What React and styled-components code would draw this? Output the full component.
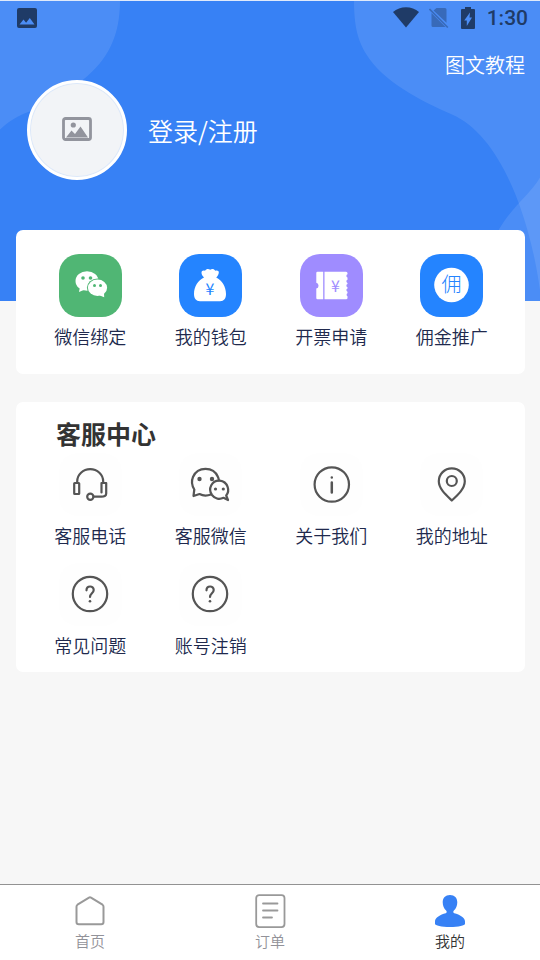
import styled, { createGlobalStyle } from "styled-components";

const GlobalStyle = createGlobalStyle`
  :root {
    --Blue: #3781f5;
    --Bright-Blue: #2484ff;
    --Green: #50b674;
    --Purple: #9f8cff;
    --Navy: #20294d;
    --Dark-Gray: #333333;
    --Icon-Gray: #555555;
    --Tab-Gray: #929299;
    --Page: #f7f7f7;
    --Status: #1f3b67;
  }
  *,
  *::before,
  *::after {
    box-sizing: border-box;
  }
  body {
    margin: 0;
    background: var(--Page);
    font-family: "Noto Sans CJK SC", sans-serif;
    font-weight: 350;
  }
  h2 {
    margin: 0;
  }
  a {
    color: inherit;
    text-decoration: none;
  }
  button {
    border: none;
    padding: 0;
    background: none;
    color: inherit;
    font: inherit;
    cursor: pointer;
  }
  svg {
    display: block;
  }
`;

const WechatIcon = () => (
  <svg viewBox="0 0 63 63" fill="#fff">
    <ellipse cx="28" cy="27" rx="11.5" ry="9.8" />
    <path d="M21 33l-1 5 6-2.5z" />
    <ellipse cx="38.5" cy="33.7" rx="10.6" ry="9.2" fill="var(--Green)" />
    <ellipse cx="38.5" cy="33.7" rx="9.6" ry="8.2" />
    <path d="M45 39l.2 4.200-5-2z" />
    <g fill="var(--Green)">
      <circle cx="24" cy="24" r="1.800" />
      <circle cx="31.500" cy="24" r="1.800" />
      <circle cx="35.500" cy="31.500" r="1.500" />
      <circle cx="41.500" cy="31.500" r="1.500" />
    </g>
  </svg>
);

const WalletIcon = () => (
  <svg viewBox="0 0 63 63" fill="#fff">
    <path d="M25 23.500c-1.500-1.500-2.500-3-2.500-5 0-1.700 1.500-2.500 3.500-1.800 1.300-2 3.600-2 5.200-.9 1.600-1.100 4-.9 5 .9 2.200-.7 3.800.2 3.600 2-.2 1.800-1.200 3.300-2.600 4.800C43 26.500 47 32.500 47 40c0 4.500-2 7.200-6 7.200H21c-4 0-6-2.700-6-7.200 0-7.500 4-13.500 10-16.500z" />
    <text
      x="31"
      y="41"
      textAnchor="middle"
      fontFamily="Noto Sans CJK SC, sans-serif"
      fontSize="16"
      fontWeight="400"
      fill="var(--Bright-Blue)"
    >
      ¥
    </text>
  </svg>
);

const TicketIcon = () => (
  <svg viewBox="0 0 63 63" fill="#fff">
    <path d="M17.500 17.800h5.700v27.400h-5.700q-1.200 0-1.200-1.200v-9.400a3 3 0 0 0 0-5.800V19q0-1.200 1.200-1.200z" />
    <path d="M24.500 17.800H46q1.500 0 1.500 1.500v1a1.700 1.700 0 0 0 0 3.200v2.200a1.700 1.700 0 0 0 0 3.200v1.200a1.700 1.700 0 0 0 0 3.200v1.200a1.700 1.700 0 0 0 0 3.200v1.600a1.700 1.700 0 0 0 0 3v1.600q0 1.300-1.500 1.300H24.500z" />
    <text
      x="35.500"
      y="38"
      textAnchor="middle"
      fontFamily="Noto Sans CJK SC, sans-serif"
      fontSize="16"
      fontWeight="400"
      fill="var(--Purple)"
    >
      ¥
    </text>
  </svg>
);

const CommissionIcon = () => (
  <svg viewBox="0 0 63 63">
    <circle cx="31.500" cy="31" r="17.300" fill="#fff" />
    <text
      x="31.500"
      y="38"
      textAnchor="middle"
      fontFamily="Noto Sans CJK SC, sans-serif"
      fontSize="20"
      fontWeight="300"
      fill="var(--Bright-Blue)"
    >
      佣
    </text>
  </svg>
);

const LineIcon = ({ children }) => (
  <svg
    viewBox="0 0 63 63"
    fill="none"
    stroke="var(--Icon-Gray)"
    strokeWidth="2.200"
    strokeLinecap="round"
    strokeLinejoin="round"
  >
    {children}
  </svg>
);

const HeadsetIcon = () => (
  <LineIcon>
    <path d="M18.200 30v-1.500a13 12.300 0 0 1 26 0V30" />
    <rect x="15.200" y="30" width="5" height="11" rx=".5" />
    <path d="M42.500 39.500V30h4.700v10.500c0 2.500-2 3.200-5 3.200h-7.500" />
    <circle cx="31.300" cy="43.700" r="3.100" />
  </LineIcon>
);

const ServiceWechatIcon = () => (
  <LineIcon>
    <path d="M32 41.500c-3.800 1.400-8 1.400-11.500-.5L14.500 43l.8-6.500C12.800 32.500 12.300 28 14 24c4.700-10.800 20.400-10.800 25 0 .5 1.100.8 2.200.9 3.500" />
    <path d="M47.200 42.500c4-4.700 1.700-13.800-6.400-14.800-7.800-.6-12.300 8-7.800 14.300 3 4 7.700 4.600 11.500 2.800L49 47z" />
    <g fill="var(--Icon-Gray)" stroke="none">
      <circle cx="20.500" cy="26" r="2.200" />
      <circle cx="33" cy="26" r="2.200" />
      <circle cx="36.500" cy="36" r="1.600" />
      <circle cx="44.300" cy="36" r="1.600" />
    </g>
  </LineIcon>
);

const AboutIcon = () => (
  <LineIcon>
    <circle cx="31.800" cy="31.500" r="17.200" />
    <path d="M31.800 29.500v10M31.800 24.400v.2" strokeWidth="2.500" />
  </LineIcon>
);

const AddressIcon = () => (
  <LineIcon>
    <path d="M31.800 47.500C25.500 41.500 18.800 35.500 18.800 28.300a13 13 0 0 1 26 0c0 7.200-6.500 13.200-13 19.200z" />
    <circle cx="31.800" cy="28" r="5" />
  </LineIcon>
);

const QuestionIcon = () => (
  <LineIcon>
    <circle cx="31" cy="31" r="17.200" />
    <path d="M27.500 27.300c0-5 7.200-5 7.200-.4 0 3.200-3.700 3.400-3.700 7" />
    <path d="M31 38.200v.1" strokeWidth="2.600" />
  </LineIcon>
);

const HomeIcon = () => (
  <svg
    viewBox="0 0 34 34"
    fill="none"
    stroke="#999"
    strokeWidth="2"
    strokeLinejoin="round"
  >
    <path d="M4.500 10.700q-1 .7-1 2V28q0 2.300 2.300 2.300h22.400q2.300 0 2.300-2.300V12.700q0-1.300-1-2L18 3.600q-1-.6-2 0z" />
  </svg>
);

const OrderIcon = () => (
  <svg
    viewBox="0 0 34 34"
    fill="none"
    stroke="#999"
    strokeWidth="1.800"
    strokeLinecap="round"
  >
    <rect x="3.200" y="1.100" width="28.300" height="32" rx="3" />
    <path d="M10 9.500h14.500M10 16.500h14.500M10 23.500h9" />
  </svg>
);

const MineIcon = () => (
  <svg viewBox="0 0 34 34" fill="var(--Blue)">
    <path d="M17 1c4.600 0 7.300 2.900 7.300 7.200 0 3.300-1.300 6.500-3.400 8.300-.9.900-.8 2.400.4 2.800 5.400 1.500 10.700 4.200 10.700 8.200v2.300C32 31.500 25.500 33 17 33S2 31.500 2 29.800v-2.300c0-4 5.300-6.700 10.700-8.200 1.200-.4 1.300-1.900.4-2.800-2.100-1.800-3.400-5-3.400-8.300C9.700 3.900 12.400 1 17 1z" />
  </svg>
);

const mainItems = [
  { label: "微信绑定", color: "var(--Green)", Icon: WechatIcon },
  { label: "我的钱包", color: "var(--Bright-Blue)", Icon: WalletIcon },
  { label: "开票申请", color: "var(--Purple)", Icon: TicketIcon },
  { label: "佣金推广", color: "var(--Bright-Blue)", Icon: CommissionIcon },
];

const serviceItems = [
  { label: "客服电话", Icon: HeadsetIcon },
  { label: "客服微信", Icon: ServiceWechatIcon },
  { label: "关于我们", Icon: AboutIcon },
  { label: "我的地址", Icon: AddressIcon },
  { label: "常见问题", Icon: QuestionIcon },
  { label: "账号注销", Icon: QuestionIcon },
];

const tabs = [
  { label: "首页", Icon: HomeIcon },
  { label: "订单", Icon: OrderIcon },
  { label: "我的", Icon: MineIcon, active: true },
];

const StatusBar = () => (
  <StatusRow>
    <svg width="20" height="20" viewBox="0 0 20 20">
      <path
        fillRule="evenodd"
        fill="currentColor"
        d="M2 0h16q2 0 2 2v16q0 2-2 2H2q-2 0-2-2V2q0-2 2-2zM2.500 16.500h15L12.800 10l-3.700 4.700-2.600-3.100z"
      />
    </svg>
    <StatusIcons>
      <svg width="26" height="22" viewBox="0 0 26 22" fill="currentColor">
        <path d="M0 5C7-1.500 19-1.500 26 5L13 20.500z" />
      </svg>
      <svg width="20" height="22" viewBox="0 0 20 22">
        <g opacity=".42">
          <path fill="currentColor" d="M7.500 1h8.500q1.500 0 1.500 1.500v13.200L4.500 3.500zM2.500 6L16.500 20H4q-1.500 0-1.500-1.500z" />
          <path d="M.5 2l18.300 18.500" stroke="currentColor" strokeWidth="1.600" />
        </g>
      </svg>
      <svg width="14" height="22" viewBox="0 0 14 22">
        <path
          fillRule="evenodd"
          fill="currentColor"
          d="M4 0h6v2h3q1 0 1 1v18q0 1-1 1H1q-1 0-1-1V3q0-1 1-1h3zM9 5.500L3.200 13.500h2.600v5.500L11 10.500H8.500z"
        />
      </svg>
      <Time>1:30</Time>
    </StatusIcons>
  </StatusRow>
);

const MenuItem = ({ label, color, Icon }) => (
  <Item type="button">
    <Tile $color={color}>
      <Icon />
    </Tile>
    <span>{label}</span>
  </Item>
);

const App = () => {
  return (
    <Page>
      <GlobalStyle />
      <Hero>
        <HeroShapes viewBox="0 0 540 301" preserveAspectRatio="none" fill="#fff">
          <path
            opacity=".1"
            d="M0 0H120C120 35 108 59 83 79C63 96 48 105 29 111C18 115 8 121 0 129z"
          />
          <path
            opacity=".1"
            d="M354 0C354 26 358 40 366 53C382 80 420 100 452 114C496 133 528 205 540 290V0z"
          />
          <path opacity=".1" d="M540 177C530 194 514 204 499 229L470 301H540z" />
        </HeroShapes>
        <StatusBar />
        <TutorialLink href="#tutorial">图文教程</TutorialLink>
        <Profile href="#login">
          <Avatar>
            <svg width="30" height="24" viewBox="0 0 30 24">
              <rect
                x="1.500"
                y="1.500"
                width="27"
                height="21"
                rx="2"
                fill="none"
                stroke="currentColor"
                strokeWidth="2.800"
              />
              <circle cx="11.300" cy="8" r="2.600" fill="currentColor" />
              <path d="M4 20.500l5.500-7 3.500 3.500 5.500-7.500L26 20.500z" fill="currentColor" />
            </svg>
          </Avatar>
          <span>登录/注册</span>
        </Profile>
      </Hero>

      <Content>
        <Card>
          <MenuGrid>
            {mainItems.map((item) => (
              <MenuItem key={item.label} {...item} />
            ))}
          </MenuGrid>
        </Card>
        <Card $compact>
          <CardTitle>客服中心</CardTitle>
          <MenuGrid>
            {serviceItems.map((item) => (
              <MenuItem key={item.label} {...item} />
            ))}
          </MenuGrid>
        </Card>
      </Content>

      <TabBar>
        {tabs.map(({ label, Icon, active }) => (
          <Tab key={label} href="#tab" $active={active}>
            <Icon />
            <span>{label}</span>
          </Tab>
        ))}
      </TabBar>
    </Page>
  );
};

export default App;

const Page = styled.div`
  display: flex;
  flex-direction: column;
  min-height: 100vh;
`;

const Hero = styled.header`
  position: relative;
  display: flex;
  flex-direction: column;
  padding-bottom: 121px;
  border-top: 1px solid #dfe9fa;
  background: var(--Blue);
  color: #fff;
`;

const HeroShapes = styled.svg`
  position: absolute;
  inset: 0;
  width: 100%;
  height: 100%;
`;

const StatusRow = styled.div`
  position: relative;
  display: flex;
  align-items: center;
  justify-content: space-between;
  height: 34px;
  padding: 0 12px 0 17px;
  color: var(--Status);
`;

const StatusIcons = styled.div`
  display: flex;
  align-items: center;
  gap: 12px;
  svg:first-child {
    margin-right: -2px;
  }
`;

const Time = styled.span`
  font-family: Roboto, sans-serif;
  font-size: 21px;
  font-weight: 500;
  line-height: 24px;
`;

const TutorialLink = styled.a`
  position: relative;
  align-self: flex-end;
  margin: 16px 15px 1px;
  font-size: 20px;
  line-height: 28px;
`;

const Profile = styled.a`
  position: relative;
  display: flex;
  align-items: center;
  align-self: flex-start;
  gap: 21px;
  margin-left: 27px;
  font-size: 25px;
  line-height: 36px;
`;

const Avatar = styled.div`
  display: flex;
  align-items: center;
  justify-content: center;
  width: 100px;
  height: 100px;
  padding-bottom: 3px;
  border: 3px solid #fff;
  border-radius: 50%;
  background: #f2f4f7;
  box-shadow: inset 0 0 0 1px #dce8fa;
  color: #92949d;
`;

const Content = styled.main`
  position: relative;
  display: flex;
  flex: 1;
  flex-direction: column;
  gap: 28px;
  margin-top: -71px;
  padding: 0 15px 28px 16px;
`;

const Card = styled.section`
  padding: ${(props) => (props.$compact ? "14px 13px 15px 14px" : "24px 13px 26px 14px")};
  border-radius: 7px;
  background: #fff;
`;

const CardTitle = styled.h2`
  padding: 0 0 2px 26px;
  color: var(--Dark-Gray);
  font-size: 25px;
  font-weight: 700;
  line-height: 35px;
`;

const MenuGrid = styled.div`
  display: grid;
  grid-template-columns: repeat(4, 1fr);
  row-gap: 16px;
`;

const Item = styled.button`
  display: flex;
  flex-direction: column;
  align-items: center;
  gap: 7px;
  color: var(--Navy);
  font-size: 18px;
  line-height: 24px;
`;

const Tile = styled.span`
  width: 63px;
  height: 63px;
  border-radius: 20px;
  background: ${(props) => props.$color || "#fefefe"};
`;

const TabBar = styled.nav`
  position: sticky;
  bottom: 0;
  display: grid;
  grid-template-columns: repeat(3, 1fr);
  padding: 9px 0 8px;
  border-top: 1px solid #929292;
  background: #fff;
`;

const Tab = styled.a`
  display: flex;
  flex-direction: column;
  align-items: center;
  gap: 2px;
  color: ${(props) => (props.$active ? "var(--Dark-Gray)" : "var(--Tab-Gray)")};
  font-size: 15px;
  line-height: 22px;
  svg {
    width: 34px;
    height: 34px;
  }
`;
